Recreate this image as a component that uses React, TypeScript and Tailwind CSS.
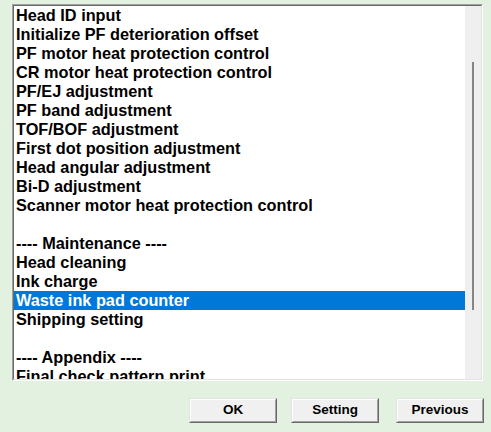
import React from "react";

const items = [
  "Head ID input",
  "Initialize PF deterioration offset",
  "PF motor heat protection control",
  "CR motor heat protection control",
  "PF/EJ adjustment",
  "PF band adjustment",
  "TOF/BOF adjustment",
  "First dot position adjustment",
  "Head angular adjustment",
  "Bi-D adjustment",
  "Scanner motor heat protection control",
  "",
  "---- Maintenance ----",
  "Head cleaning",
  "Ink charge",
  "Waste ink pad counter",
  "Shipping setting",
  "",
  "---- Appendix ----",
  "Final check pattern print",
];

const selected = "Waste ink pad counter";

function WinButton({ label, className = "" }: { label: string; className?: string }) {
  return (
    <div
      className={`h-[25px] w-[88px] border border-t-[#e3e3e3] border-l-[#e3e3e3] border-r-[#696969] border-b-[#696969] ${className}`}
    >
      <div className="flex h-full w-full items-center justify-center border border-t-white border-l-white border-r-[#a0a0a0] border-b-[#a0a0a0] bg-[#f0f0f0] text-[13.5px] font-bold text-black">
        {label}
      </div>
    </div>
  );
}

export default function App() {
  return (
    <div className="h-[432px] w-[491px] overflow-hidden bg-[#e3f1e1] pt-[4px] font-['Liberation_Sans',Arial,sans-serif]">
      {/* List box */}
      <div className="ml-[12px] h-[377px] w-[471px] border border-t-[#a0a0a0] border-l-[#a0a0a0] border-r-white border-b-white">
        <div className="flex h-full w-full border border-t-[#696969] border-l-[#696969] border-r-[#e3e3e3] border-b-[#e3e3e3]">
          <div className="flex-1 overflow-hidden bg-white">
            {items.map((item, i) => (
              <div
                key={i}
                className={`h-[19px] whitespace-nowrap pl-[2px] text-[16.3px] font-bold leading-[19px] ${
                  item === selected ? "bg-[#0078d7] text-white" : "text-black"
                }`}
              >
                {item}
              </div>
            ))}
          </div>
          {/* Scroll bar */}
          <div className="relative w-[16px] bg-[#efefef]">
            <div className="absolute left-[7px] top-[56px] h-[248px] w-[2px] bg-[#858585]" />
          </div>
        </div>
      </div>

      {/* Buttons */}
      <div className="mt-[17px] flex">
        <WinButton label="OK" className="ml-[189px]" />
        <WinButton label="Setting" className="ml-[14px]" />
        <WinButton label="Previous" className="ml-[17px]" />
      </div>
    </div>
  );
}
